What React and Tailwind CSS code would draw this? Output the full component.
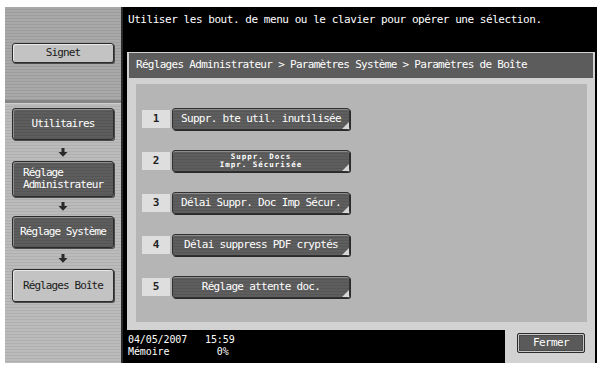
import React from 'react';
import clsx from 'clsx';

const mono = "font-['DejaVu_Sans_Mono','Liberation_Mono',monospace]";

const DownArrow = () => (
  <svg width="10" height="9" viewBox="0 0 10 9">
    <rect x="3.5" y="0" width="3" height="4.5" fill="#2a2a2a" />
    <path d="M0.5 4 H9.5 L5 8.8 Z" fill="#2a2a2a" />
  </svg>
);

const SideBtn = ({ dark, className, children }) => (
  <div
    className={clsx(
      'mx-[7px] flex items-center rounded-[3px] border border-[#2c2c2c] text-[11px] leading-[12px] tracking-[-0.9px]',
      dark
        ? 'bg-[repeating-linear-gradient(180deg,#5d5d5d_0px,#5d5d5d_2px,#555555_2px,#555555_3px)] text-white shadow-[inset_1px_1px_0_#8e8e8e,1px_1px_0_#4a4a4a]'
        : 'bg-[#c3c3c3] text-[#1a1a1a] shadow-[inset_1px_1px_0_#e8e8e8,1px_1px_0_#4a4a4a]',
      className
    )}
  >
    {children}
  </div>
);

const Arrow = ({ className }) => (
  <div className={clsx('flex items-center justify-center', className)}>
    <DownArrow />
  </div>
);

const OptionRow = ({ num, children }) => (
  <div className="flex h-[22px] items-center">
    <div className="ml-[6px] mr-[2px] flex h-[18px] w-[28px] items-center justify-center bg-[#dedede] text-[11px] font-bold text-[#1e1e1e]">
      {num}
    </div>
    <div className="relative flex h-[22px] w-[178px] items-center justify-center rounded-[3px] border border-[#303030] bg-[repeating-linear-gradient(180deg,#5e5e5e_0px,#5e5e5e_2px,#565656_2px,#565656_3px)] text-white shadow-[inset_0_1px_0_#8c8c8c,1px_1px_0_#2a2a2a]">
      {children}
      <svg className="absolute bottom-0 right-0" width="7" height="7" viewBox="0 0 7 7">
        <polygon points="7,0 7,7 0,7" fill="#d6d6d6" />
      </svg>
    </div>
  </div>
);

export default function App() {
  return (
    <div className={clsx('h-[370px] w-[601px] bg-white pl-[5px] pt-[7px]', mono)}>
      <div className="flex h-[356px] w-[592px]">
        {/* sidebar */}
        <div className="flex w-[118px] flex-col border-r-2 border-[#2a2a2a]">
          <div className="h-[93px] bg-[repeating-linear-gradient(180deg,#a9a9a9_0px,#a9a9a9_2px,#9c9c9c_2px,#9c9c9c_3px)] pt-[36px]">
            <SideBtn className="h-[20px] justify-center">Signet</SideBtn>
          </div>
          <div className="h-[3px] bg-[#858585]" />
          <div className="flex-1 border-t border-[#cfcfcf] bg-[repeating-linear-gradient(180deg,#bbbbbb_0px,#bbbbbb_2px,#afafaf_2px,#afafaf_3px)] pt-[4px]">
            <SideBtn dark className="h-[32px] justify-center">Utilitaires</SideBtn>
            <Arrow className="h-[21px] pt-[4px]" />
            <SideBtn dark className="h-[36px] pl-[10px]">
              <span>
                Réglage
                <br />
                Administrateur
              </span>
            </SideBtn>
            <Arrow className="h-[19px]" />
            <SideBtn dark className="h-[32px] justify-center">Réglage Système</SideBtn>
            <Arrow className="h-[21px]" />
            <SideBtn className="h-[33px] justify-center">Réglages Boîte</SideBtn>
          </div>
        </div>

        {/* main */}
        <div className="flex w-[474px] flex-col bg-black">
          <div className="h-[45px] pl-[5px] pt-[7px] text-[11px] leading-[12px] tracking-[-0.45px] text-white">
            Utiliser les bout. de menu ou le clavier pour opérer une sélection.
          </div>

          <div className="ml-[4px] flex h-[278px] w-[468px] flex-col bg-[#d2d2d2] pt-[1px]">
            <div className="mx-[2px] flex h-[25px] items-center bg-[#5c5c5c] pl-[7px] text-[11px] tracking-[-0.7px] text-white">
              Réglages Administrateur &gt; Paramètres Système &gt; Paramètres de Boîte
            </div>
            <div className="mb-[8px] ml-[9px] mr-[8px] mt-[6px] flex flex-1 flex-col gap-5 bg-[#b5b5b5] pt-[24px]">
              <OptionRow num="1">
                <span className="text-[11px] tracking-[-0.7px]">Suppr. bte util. inutilisée</span>
              </OptionRow>
              <OptionRow num="2">
                <span className="text-center text-[7.5px] font-bold leading-[8px] tracking-[1px]">
                  Suppr. Docs
                  <br />
                  Impr. Sécurisée
                </span>
              </OptionRow>
              <OptionRow num="3">
                <span className="text-[11px] tracking-[-0.7px]">Délai Suppr. Doc Imp Sécur.</span>
              </OptionRow>
              <OptionRow num="4">
                <span className="text-[11px] tracking-[-0.7px]">Délai suppress PDF cryptés</span>
              </OptionRow>
              <OptionRow num="5">
                <span className="text-[11px] tracking-[-0.7px]">Réglage attente doc.</span>
              </OptionRow>
            </div>
          </div>

          <div className="flex h-[33px]">
            <div className="w-[382px] whitespace-pre pl-[5px] pt-[4px] text-[10px] leading-[12px] tracking-[-0.1px] text-white">
              {'04/05/2007   15:59\nMémoire        0%'}
            </div>
            <div className="w-[90px] bg-[#d2d2d2] pl-[12px] pt-[3px]">
              <div className="flex h-[20px] w-[68px] items-center justify-center rounded-[2px] border border-[#2c2c2c] bg-[#5a5a5a] text-[11px] tracking-[-0.6px] text-white shadow-[inset_0_0_0_1px_#c8c8c8,inset_0_0_0_2px_#4a4a4a]">
                Fermer
              </div>
            </div>
          </div>
        </div>
      </div>
    </div>
  );
}
